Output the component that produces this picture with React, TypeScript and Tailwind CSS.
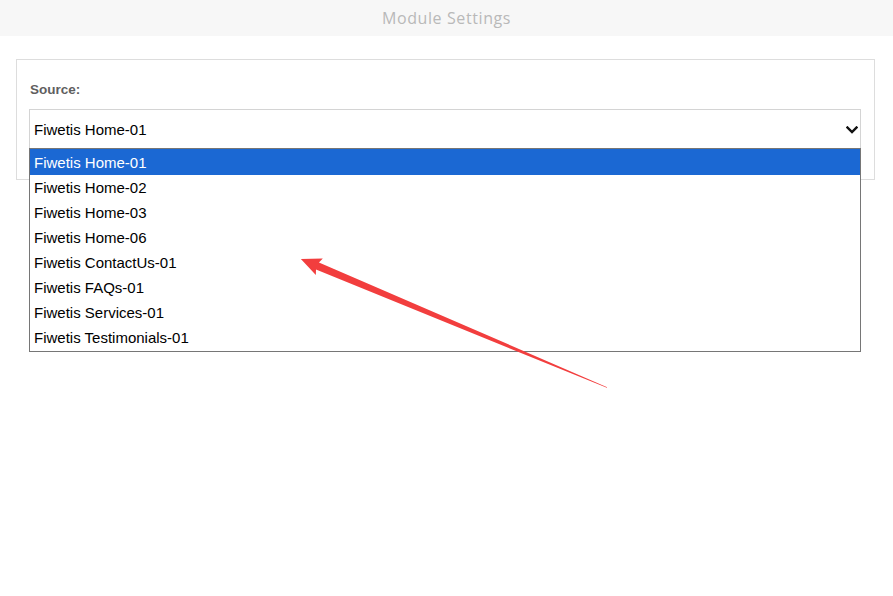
import React from "react";

const options = [
  "Fiwetis Home-01",
  "Fiwetis Home-02",
  "Fiwetis Home-03",
  "Fiwetis Home-06",
  "Fiwetis ContactUs-01",
  "Fiwetis FAQs-01",
  "Fiwetis Services-01",
  "Fiwetis Testimonials-01",
];

function Chevron() {
  return (
    <svg width="12" height="8" viewBox="0 0 12 8" className="block">
      <path d="M1.5 1.5 L6 6 L10.5 1.5" fill="none" stroke="#111" strokeWidth="2.4" strokeLinecap="square" />
    </svg>
  );
}

function Pointer() {
  // red callout arrow, drawn from tail to tip then rotated into place
  return (
    <svg className="pointer-events-none absolute left-0 top-0 z-20" width="893" height="596">
      <g transform="translate(607 387.5) rotate(202.77)">
        <polygon points="0,-0.4 314,-3.8 312,-9 332,0 312,9 314,3.8 0,0.4" fill="#f23e3e" />
      </g>
    </svg>
  );
}

export default function App() {
  return (
    <div className="relative h-[596px] w-[893px] overflow-hidden bg-white" style={{ fontFamily: '"Liberation Sans", Arial, sans-serif' }}>
      <header className="flex h-9 items-center justify-center bg-[#f7f7f7]">
        <span className="text-[16px] tracking-[0.6px] text-[#b9b9b9]" style={{ fontFamily: '"Open Sans", sans-serif' }}>
          Module Settings
        </span>
      </header>

      <div className="px-4 pt-[23px]">
        <div className="h-[121px] w-[859px] border border-[#dddddd] px-[12px] pt-[22px]">
          <div className="ml-[1px] text-[13.5px] font-bold leading-[16px] text-[#5f5f5f]">Source:</div>
          <div className="relative mt-[11px]">
            <div className="flex h-[40px] w-[832px] items-center justify-between border border-[#d4d4d4] pl-[4px] pr-[2px] pt-[2px] text-[15px] text-black">
              <span>Fiwetis Home-01</span>
              <Chevron />
            </div>
            <ul className="absolute left-0 top-[39px] z-10 w-[832px] border border-[#767676] bg-white pb-[1px] text-[15px] text-black">
              {options.map((o, i) => (
                <li
                  key={o}
                  className={
                    i === 0
                      ? "flex h-[26px] items-center bg-[#1b68d3] pl-[4px] pt-[2px] text-white"
                      : "flex h-[25px] items-center pl-[4px] pt-[2px]"
                  }
                >
                  {o}
                </li>
              ))}
            </ul>
          </div>
        </div>
      </div>

      <Pointer />
    </div>
  );
}
